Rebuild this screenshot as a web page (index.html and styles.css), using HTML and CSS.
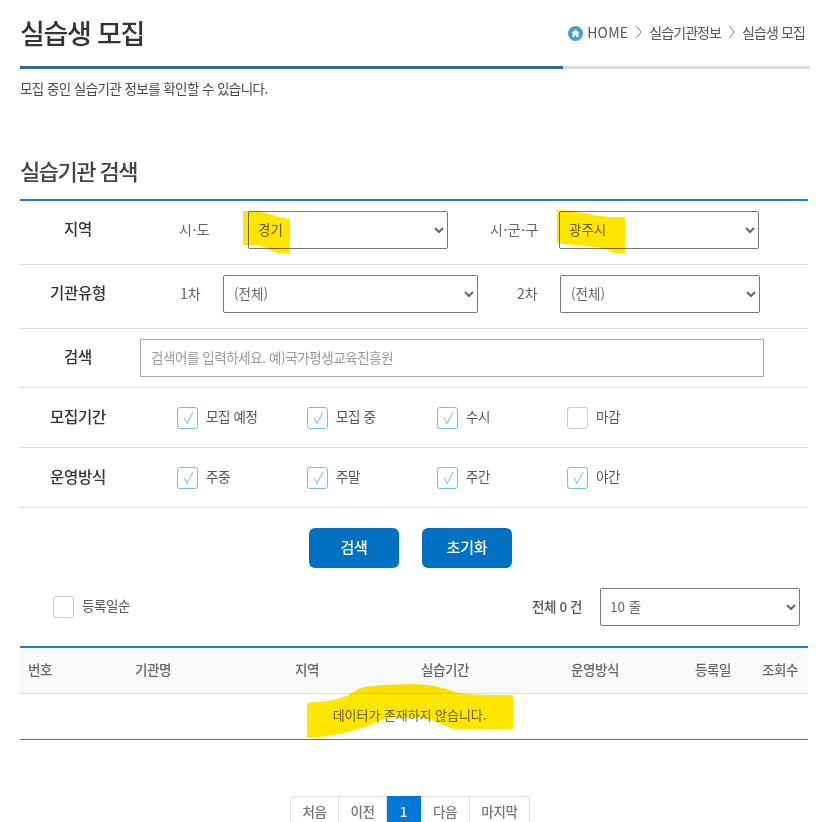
FILE: index.html
```html
<!DOCTYPE html>
<html lang="ko">
<head>
<meta charset="utf-8">
<title>실습생 모집</title>
<link rel="stylesheet" href="styles.css">
</head>
<body>
<div class="page">
  <header class="top">
    <h1 class="title">실습생 모집</h1>
    <nav class="crumbs">
      <svg class="home" viewBox="0 0 15 15"><circle cx="7.5" cy="7.5" r="7.5" fill="#4b9cd3"/><path d="M7.5 3.4 3.4 7.3h1.2v4h2v-2.4h1.8v2.4h2v-4h1.2z" fill="#fff"/></svg>
      <span class="crumb-home">HOME</span>
      <svg class="sep" viewBox="0 0 6 12"><path d="M.7.5 5.2 6 .7 11.5" fill="none" stroke="#777" stroke-width="1"/></svg>
      <span>실습기관정보</span>
      <svg class="sep" viewBox="0 0 6 12"><path d="M.7.5 5.2 6 .7 11.5" fill="none" stroke="#777" stroke-width="1"/></svg>
      <span>실습생 모집</span>
    </nav>
  </header>
  <div class="rule"><div class="rule-on"></div></div>
  <p class="intro">모집 중인 실습기관 정보를 확인할 수 있습니다.</p>

  <h2 class="sub">실습기관 검색</h2>
  <form class="form">
    <div class="row row-sel">
      <div class="lab">지역</div>
      <span class="mini m1">시·도</span>
      <select class="sel s1"><option>경기</option></select>
      <span class="mini m2">시·군·구</span>
      <select class="sel s2"><option>광주시</option></select>
    </div>
    <div class="row row-sel">
      <div class="lab">기관유형</div>
      <span class="mini m3">1차</span>
      <select class="sel s3"><option>(전체)</option></select>
      <span class="mini m4">2차</span>
      <select class="sel s4"><option>(전체)</option></select>
    </div>
    <div class="row row-input">
      <div class="lab">검색</div>
      <input class="search" type="text" placeholder="검색어를 입력하세요. 예)국가평생교육진흥원">
    </div>
    <div class="row row-chk">
      <div class="lab">모집기간</div>
      <div class="checks">
        <label class="chk"><span class="box on"><svg viewBox="0 0 21 22"><path d="M7 10.5l3 6L16 5" fill="none" stroke="#85c8ec" stroke-width="1.1"/></svg></span>모집 예정</label>
        <label class="chk"><span class="box on"><svg viewBox="0 0 21 22"><path d="M7 10.5l3 6L16 5" fill="none" stroke="#85c8ec" stroke-width="1.1"/></svg></span>모집 중</label>
        <label class="chk"><span class="box on"><svg viewBox="0 0 21 22"><path d="M7 10.5l3 6L16 5" fill="none" stroke="#85c8ec" stroke-width="1.1"/></svg></span>수시</label>
        <label class="chk"><span class="box"></span>마감</label>
      </div>
    </div>
    <div class="row row-chk">
      <div class="lab">운영방식</div>
      <div class="checks">
        <label class="chk"><span class="box on"><svg viewBox="0 0 21 22"><path d="M7 10.5l3 6L16 5" fill="none" stroke="#85c8ec" stroke-width="1.1"/></svg></span>주중</label>
        <label class="chk"><span class="box on"><svg viewBox="0 0 21 22"><path d="M7 10.5l3 6L16 5" fill="none" stroke="#85c8ec" stroke-width="1.1"/></svg></span>주말</label>
        <label class="chk"><span class="box on"><svg viewBox="0 0 21 22"><path d="M7 10.5l3 6L16 5" fill="none" stroke="#85c8ec" stroke-width="1.1"/></svg></span>주간</label>
        <label class="chk"><span class="box on"><svg viewBox="0 0 21 22"><path d="M7 10.5l3 6L16 5" fill="none" stroke="#85c8ec" stroke-width="1.1"/></svg></span>야간</label>
      </div>
    </div>
    <div class="actions">
      <button class="btn" type="button">검색</button>
      <button class="btn" type="button">초기화</button>
    </div>
    <div class="sort">
      <label class="chk chk-sort"><span class="box"></span>등록일순</label>
      <span class="total">전체 0 건</span>
      <select class="sel s5"><option>10 줄</option></select>
    </div>
  </form>

  <table class="grid">
    <colgroup>
      <col class="c1"><col class="c2"><col class="c3"><col class="c4"><col class="c5"><col class="c6"><col class="c7">
    </colgroup>
    <thead>
      <tr><th>번호</th><th>기관명</th><th>지역</th><th>실습기간</th><th>운영방식</th><th>등록일</th><th class="last">조회수</th></tr>
    </thead>
    <tbody>
      <tr><td colspan="7">데이터가 존재하지 않습니다.</td></tr>
    </tbody>
  </table>

  <div class="pager">
    <a class="pg p-first">처음</a><a class="pg">이전</a><a class="pg on">1</a><a class="pg">다음</a><a class="pg p-last">마지막</a>
  </div>
</div>
<svg class="marker" viewBox="0 0 824 822" aria-hidden="true">
  <path d="M243 211 C252 211 262 211 270 214 C278 217 284 218 290 219 L290 253 277 253 C270 250 265 246 255 245 L243 245z"/>
  <path d="M557 210 C570 210 585 213 600 216 C608 217 618 217 625 217 L625 253 614 253 C606 249 598 247 585 246 C575 245 565 244 557 243z"/>
  <path d="M307 705 Q308 702 314 702 C330 702 345 698 355 691 C362 686 375 685 412 684 C430 684 445 688 455 692 C465 695 490 695 513 695 L513 729 C490 729 465 730 455 729 C445 727 440 722 428 719 C415 717 395 717 382 720 C370 726 350 733 320 737 L307 738z"/>
</svg>
</body>
</html>
```
FILE: styles.css
```css
* { box-sizing: border-box; }
html, body { margin: 0; height: 100%; overflow: hidden; background: #fff; }
body {
  font-family: "Noto Sans CJK KR", "Noto Sans", sans-serif;
  color: #555;
  position: relative;
}
.page { padding: 0 16px 0 20px; }

.top { display: flex; justify-content: space-between; align-items: center; height: 66px; padding-bottom: 2px; }
.title { margin: 0; font-size: 27px; font-weight: 500; color: #333; letter-spacing: -1.3px; }
.crumbs { display: flex; align-items: center; font-size: 14px; letter-spacing: -0.9px; color: #555; margin-right: 3px; }
.home { width: 15px; height: 15px; margin-right: 4px; margin-top: 2px; }
.crumb-home { letter-spacing: 0.2px; }
.sep { width: 6px; height: 12px; margin: 0 7.5px; }

.rule { height: 3px; width: 790px; background: #dcdcdc; }
.rule-on { height: 3px; width: 543px; background: #2f6a98; }
.intro { margin: 0; padding-top: 10px; height: 40px; font-size: 13.5px; line-height: 19px; letter-spacing: -0.57px; color: #4a4a4a; }

.sub { margin: 0; padding-top: 44px; height: 90px; font-size: 22px; line-height: 34px; font-weight: 500; color: #444; letter-spacing: -1.5px; }
.form { border-top: 2px solid #1a82c4; }

.row { display: flex; align-items: center; border-bottom: 1px solid #ddd; }
.row-sel { padding: 10px 0 15px; height: 64px; }
.row-input { padding: 10px 0; height: 59px; }
.row-chk { height: 60px; }
.lab { width: 116px; flex: none; text-align: center; font-size: 15.5px; font-weight: 500; color: #333; letter-spacing: -0.2px; padding-bottom: 4px; }

.mini { font-size: 14px; color: #666; white-space: nowrap; letter-spacing: 0.5px; padding-bottom: 3px; }
.m1 { margin-left: 43px; width: 69px; }
.m2 { margin-left: 42px; width: 69px; }
.m3 { margin-left: 44px; width: 43px; letter-spacing: 0; }
.m4 { margin-left: 39px; width: 43px; letter-spacing: 0; }
.sel {
  height: 38px; width: 200px; flex: none;
  font: 400 13.5px "Noto Sans CJK KR", "Noto Sans", sans-serif;
  color: #666; background: #fff;
  border: 1px solid #767676; border-radius: 2px; padding: 0 0 3px 5px;
}
.s3 { width: 255px; padding-left: 6px; }
.s4 { width: 200px; padding-left: 6px; }
.search {
  margin-left: 4px; width: 624px; height: 38px; flex: none;
  border: 1px solid #aaa; padding: 0 10px 3px; outline: none;
  font: 400 13.5px "Noto Sans CJK KR", "Noto Sans", sans-serif; letter-spacing: -0.42px;
}
.search::placeholder { color: #999; opacity: 1; }

.checks { display: flex; margin-left: 41px; }
.chk { width: 130px; height: 22px; display: flex; align-items: flex-start; font-size: 13.5px; line-height: 18px; color: #555; letter-spacing: -0.4px; }
.box { width: 21px; height: 22px; flex: none; border: 1px solid #ccc; border-radius: 3px; margin-right: 8px; background: #fff; position: relative; }
.box.on { border-color: #73c0ea; }
.box svg { position: absolute; left: -1px; top: -1px; width: 21px; height: 22px; display: block; }

.actions { display: flex; justify-content: flex-start; gap: 23px; padding: 20px 0 20px 289px; }
.btn {
  width: 90px; height: 40px; border: 0; border-radius: 6px;
  background: #0070c0; color: #fff; padding: 0 0 4px;
  font: 500 15px "Noto Sans CJK KR", "Noto Sans", sans-serif; letter-spacing: -0.2px;
}
.sort { display: flex; align-items: center; height: 38px; }
.chk-sort { margin-left: 33px; width: 479px; }
.total { width: 68px; font-size: 13.5px; color: #555; font-weight: 500; letter-spacing: -0.4px; white-space: nowrap; padding-bottom: 3px; }
.s5 { width: 200px; }

.grid { width: 788px; margin-top: 20px; border-collapse: separate; border-spacing: 0; table-layout: fixed; border-top: 2px solid #1a82c4; }
.c1 { width: 40px; } .c2 { width: 186px; } .c3 { width: 122px; } .c4 { width: 154px; }
.c5 { width: 146px; } .c6 { width: 90px; } .c7 { width: 50px; }
.grid th {
  height: 46px; padding: 0 0 4px; background: #f8f9fb; border-bottom: 1px solid #ddd;
  font-size: 13.5px; font-weight: 500; color: #666; letter-spacing: -0.4px; white-space: nowrap;
}
.grid th.last { padding-right: 6px; }
.grid td { height: 46px; padding: 0 9px 4px 0; text-align: center; font-size: 13px; color: #666; letter-spacing: -0.05px; border-bottom: 1px solid #2a80b9; }

.pager { display: flex; margin: 56px 0 0 270px; }
.pg {
  display: block; height: 34px; line-height: 28px; text-align: center;
  border: 1px solid #ddd; border-left: 0; font-size: 13.5px; color: #777; font-weight: 500; letter-spacing: -0.3px;
  width: 49px;
}
.p-first { border-left: 1px solid #ddd; border-radius: 4px 0 0 0; }
.pg:nth-child(2) { width: 48px; }
.pg.on { width: 34px; background: #0078d7; border-color: #0078d7; color: #fff; }
.p-last { width: 60px; border-radius: 0 4px 0 0; }

.marker { position: absolute; left: 0; top: 0; width: 824px; height: 822px; pointer-events: none; mix-blend-mode: multiply; }
.marker path { fill: #ffe600; }
```
